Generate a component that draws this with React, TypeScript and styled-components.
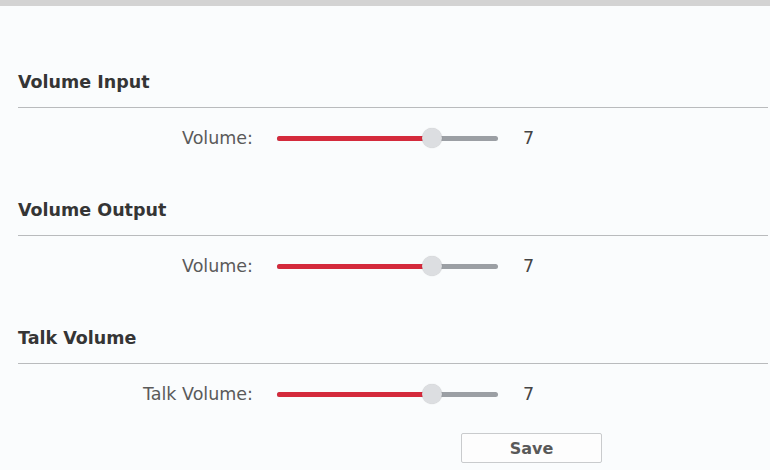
import styled, { createGlobalStyle } from "styled-components";

const GlobalStyle = createGlobalStyle`
    html, body {
        margin: 0;
        padding: 0;
        background: #fafcfd;
    }
    body {
        font-family: "DejaVu Sans", "Open Sans", sans-serif;
    }
`;

const Page = styled.div`
    width: 770px;
    height: 470px;
    overflow: hidden;
    background: #fafcfd;
`;

const TopBar = styled.div`
    height: 6px;
    background: #d3d3d3;
`;

const Content = styled.div`
    padding: 66px 2px 0 18px;
`;

const Section = styled.section`
    & + & {
        margin-top: 47px;
    }
`;

const Heading = styled.h3`
    margin: 0;
    padding-bottom: 15px;
    border-bottom: 1px solid #b9bbbd;
    font-size: 17.5px;
    line-height: 20px;
    font-weight: 700;
    color: #353535;
`;

const Row = styled.div`
    display: flex;
    align-items: center;
    height: 30px;
    margin-top: 15px;
`;

const Label = styled.span`
    width: 235px;
    text-align: right;
    font-size: 17.5px;
    color: #5a5a5a;
    white-space: nowrap;
`;

const Track = styled.div`
    position: relative;
    width: 221px;
    height: 5px;
    margin-left: 24px;
    border-radius: 3px;
    background: #9b9fa4;
`;

const Fill = styled.div`
    height: 100%;
    border-radius: 3px 0 0 3px;
    background: #d42a3c;
`;

const Thumb = styled.div`
    position: absolute;
    top: 50%;
    width: 20px;
    height: 20px;
    margin-left: -10px;
    margin-top: -10px;
    border-radius: 50%;
    background: #dcdee1;
    box-shadow: 0 0 1px rgba(0, 0, 0, 0.25);
`;

const Value = styled.span`
    margin-left: 25px;
    font-size: 17.5px;
    color: #444;
`;

const ButtonRow = styled.div`
    padding-left: 443px;
    margin-top: 24px;
`;

const SaveButton = styled.button`
    width: 141px;
    height: 30px;
    padding: 0;
    border: 1px solid #c9cbcd;
    border-radius: 2px;
    background: #fdfdfd;
    font-family: "DejaVu Sans", "Open Sans", sans-serif;
    font-size: 16px;
    font-weight: 700;
    color: #595959;
    cursor: pointer;
`;

interface VolumeRowProps {
    title: string;
    label: string;
    value: number;
    max?: number;
}

const VolumeSection = ({ title, label, value, max = 10 }: VolumeRowProps) => {
    const pct = (value / max) * 100;
    return (
        <Section>
            <Heading>{title}</Heading>
            <Row>
                <Label>{label}</Label>
                <Track>
                    <Fill style={{ width: `${pct}%` }} />
                    <Thumb style={{ left: `${pct}%` }} />
                </Track>
                <Value>{value}</Value>
            </Row>
        </Section>
    );
};

const App = () => {
    return (
        <Page>
            <GlobalStyle />
            <TopBar />
            <Content>
                <VolumeSection title="Volume Input" label="Volume:" value={7} />
                <VolumeSection title="Volume Output" label="Volume:" value={7} />
                <VolumeSection title="Talk Volume" label="Talk Volume:" value={7} />
                <ButtonRow>
                    <SaveButton>Save</SaveButton>
                </ButtonRow>
            </Content>
        </Page>
    );
};

export default App;
